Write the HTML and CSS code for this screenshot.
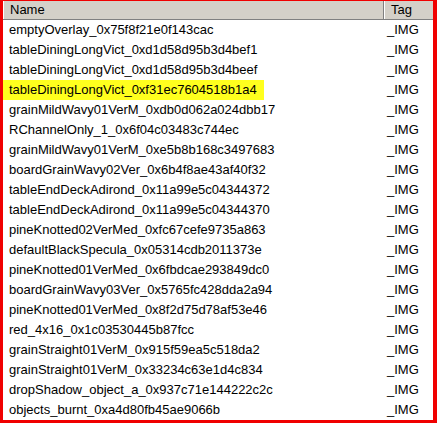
FILE: index.html
```html
<html lang="en">

<head>
    <meta charset="UTF-8">
    <title>Objects</title>
    <link rel="stylesheet" href="styles.css">
</head>

<body>
    <div class="frame">
        <div class="head">
            <div class="col col-name">Name</div>
            <div class="col col-tag">Tag</div>
        </div>
        <div class="list">
            <div class="item"><span class="name">emptyOverlay_0x75f8f21e0f143cac</span><span class="tag">_IMG</span></div>
            <div class="item"><span class="name">tableDiningLongVict_0xd1d58d95b3d4bef1</span><span class="tag">_IMG</span></div>
            <div class="item"><span class="name">tableDiningLongVict_0xd1d58d95b3d4beef</span><span class="tag">_IMG</span></div>
            <div class="item"><span class="name"><span class="mark">tableDiningLongVict_0xf31ec7604518b1a4</span></span><span class="tag">_IMG</span></div>
            <div class="item"><span class="name">grainMildWavy01VerM_0xdb0d062a024dbb17</span><span class="tag">_IMG</span></div>
            <div class="item"><span class="name">RChannelOnly_1_0x6f04c03483c744ec</span><span class="tag">_IMG</span></div>
            <div class="item"><span class="name">grainMildWavy01VerM_0xe5b8b168c3497683</span><span class="tag">_IMG</span></div>
            <div class="item"><span class="name">boardGrainWavy02Ver_0x6b4f8ae43af40f32</span><span class="tag">_IMG</span></div>
            <div class="item"><span class="name">tableEndDeckAdirond_0x11a99e5c04344372</span><span class="tag">_IMG</span></div>
            <div class="item"><span class="name">tableEndDeckAdirond_0x11a99e5c04344370</span><span class="tag">_IMG</span></div>
            <div class="item"><span class="name">pineKnotted02VerMed_0xfc67cefe9735a863</span><span class="tag">_IMG</span></div>
            <div class="item"><span class="name">defaultBlackSpecula_0x05314cdb2011373e</span><span class="tag">_IMG</span></div>
            <div class="item"><span class="name">pineKnotted01VerMed_0x6fbdcae293849dc0</span><span class="tag">_IMG</span></div>
            <div class="item"><span class="name">boardGrainWavy03Ver_0x5765fc428dda2a94</span><span class="tag">_IMG</span></div>
            <div class="item"><span class="name">pineKnotted01VerMed_0x8f2d75d78af53e46</span><span class="tag">_IMG</span></div>
            <div class="item"><span class="name">red_4x16_0x1c03530445b87fcc</span><span class="tag">_IMG</span></div>
            <div class="item"><span class="name">grainStraight01VerM_0x915f59ea5c518da2</span><span class="tag">_IMG</span></div>
            <div class="item"><span class="name">grainStraight01VerM_0x33234c63e1d4c834</span><span class="tag">_IMG</span></div>
            <div class="item"><span class="name">dropShadow_object_a_0x937c71e144222c2c</span><span class="tag">_IMG</span></div>
            <div class="item"><span class="name">objects_burnt_0xa4d80fb45ae9066b</span><span class="tag">_IMG</span></div>
        </div>
    </div>
</body>

</html>
```

FILE: styles.css
```css
body {
    margin: 0;
    font-family: "Liberation Sans", Arial, sans-serif;
    font-size: 13px;
    color: #000000;
}

.frame {
    box-sizing: border-box;
    width: 437px;
    height: 423px;
    border-style: solid;
    border-color: #f00000;
    border-width: 1px 4px 3px 3px;
    background-color: #ffffff;
    overflow: hidden;
}

.head {
    display: flex;
    height: 19px;
    box-sizing: border-box;
    background-color: #d4d0c8;
    border-bottom: 1px solid #808080;
}

.col {
    box-sizing: border-box;
    height: 18px;
    line-height: 17px;
    padding-left: 6px;
    border-left: 1px solid #ffffff;
    border-right: 1px solid #808080;
}

.col-name {
    width: 381px;
}

.col-tag {
    flex: 1;
    border-right: none;
}

.item {
    display: flex;
    height: 20px;
    line-height: 20px;
}

.name {
    width: 381px;
    flex-shrink: 0;
}

.name::before {
    content: "";
    display: inline-block;
    width: 6px;
}

.mark {
    display: inline-block;
    margin-left: -6px;
    padding: 0 7px 0 6px;
    background-color: #ffff1e;
}

.tag {
    padding-left: 3px;
}
```
